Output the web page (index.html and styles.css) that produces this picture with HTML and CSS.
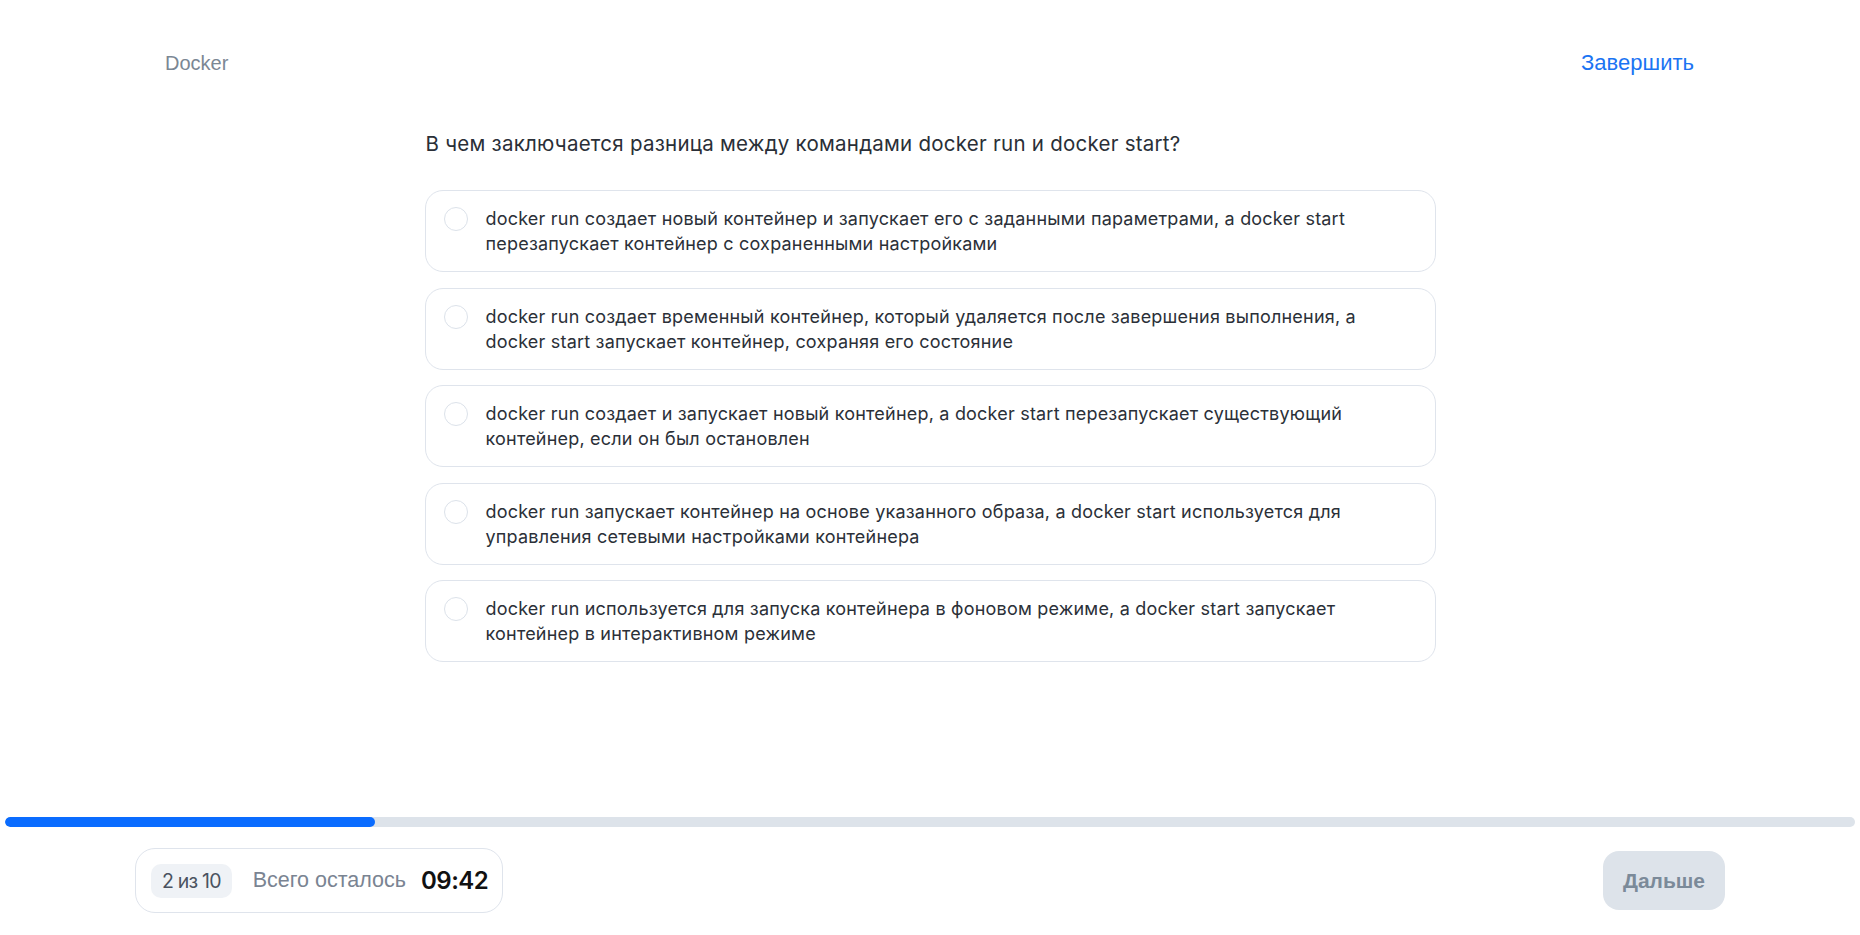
FILE: index.html
```html
<!DOCTYPE html>
<html lang="ru">
<head>
<meta charset="utf-8">
<title>Docker — тест</title>
<link rel="stylesheet" href="styles.css">
</head>
<body>
<div class="page">
  <header class="topbar">
    <span class="topic">Docker</span>
    <a class="finish" href="#">Завершить</a>
  </header>

  <main class="quiz">
    <h1 class="question">В чем заключается разница между командами docker run и docker start?</h1>
    <ul class="options">
      <li class="option"><span class="radio"></span><span class="option-text">docker run создает новый контейнер и запускает его с заданными параметрами, а docker start перезапускает контейнер с сохраненными настройками</span></li>
      <li class="option"><span class="radio"></span><span class="option-text">docker run создает временный контейнер, который удаляется после завершения выполнения, а docker start запускает контейнер, сохраняя его состояние</span></li>
      <li class="option"><span class="radio"></span><span class="option-text">docker run создает и запускает новый контейнер, а docker start перезапускает существующий контейнер, если он был остановлен</span></li>
      <li class="option"><span class="radio"></span><span class="option-text">docker run запускает контейнер на основе указанного образа, а docker start используется для управления сетевыми настройками контейнера</span></li>
      <li class="option"><span class="radio"></span><span class="option-text">docker run используется для запуска контейнера в фоновом режиме, а docker start запускает контейнер в интерактивном режиме</span></li>
    </ul>
  </main>

  <footer class="bottom">
    <div class="progress"><div class="progress-fill" style="width: 20%"></div></div>
    <div class="bottom-row">
      <div class="status">
        <span class="counter">2 из 10</span>
        <span class="remaining">Всего осталось</span>
        <span class="timer">09:42</span>
      </div>
      <button class="next" type="button">Дальше</button>
    </div>
  </footer>
</div>
</body>
</html>
```

FILE: styles.css
```css
* { box-sizing: border-box; }

html, body {
  margin: 0;
  padding: 0;
  background: #ffffff;
}

body {
  font-family: Inter, "Noto Sans", sans-serif;
  color: #2a2f36;
}

.page {
  min-height: 100vh;
  display: flex;
  flex-direction: column;
}

.topbar {
  display: flex;
  justify-content: space-between;
  align-items: center;
  padding: 52px 166px 0 165px;
  font-family: "Liberation Sans", Arial, sans-serif;
  line-height: 22px;
}

.topic {
  font-size: 20px;
  color: #7b8794;
}

.finish {
  font-size: 22px;
  color: #1b74f3;
  text-decoration: none;
}

.quiz {
  width: 1011px;
  margin: 0 auto;
}

.question {
  margin: 58px 0 34px 1px;
  font-size: 20.5px;
  line-height: 24px;
  letter-spacing: 0.25px;
  font-weight: 400;
  color: #2a2f37;
}

.options {
  list-style: none;
  margin: 0;
  padding: 0;
  display: flex;
  flex-direction: column;
  gap: 15.5px;
}

.option {
  display: flex;
  align-items: flex-start;
  gap: 18px;
  min-height: 82px;
  border: 1px solid #dfe4ec;
  border-radius: 18px;
  padding: 15px 40px 15px 18px;
  font-size: 18px;
  line-height: 25px;
  letter-spacing: 0.2px;
  color: #2b3038;
}

.radio {
  flex: none;
  width: 24px;
  height: 24px;
  margin-top: 1px;
  border: 1.5px solid #dce2ea;
  border-radius: 50%;
}

.bottom {
  margin-top: auto;
}

.progress {
  margin: 0 5px;
  height: 10px;
  border-radius: 5px;
  background: #dde3ea;
  overflow: hidden;
}

.progress-fill {
  height: 100%;
  border-radius: 5px;
  background: #0a6cff;
}

.bottom-row {
  display: flex;
  justify-content: space-between;
  align-items: center;
  padding: 21px 135px 22px 135px;
}

.status {
  display: flex;
  align-items: center;
  height: 65px;
  padding: 0 14px 0 15px;
  border: 1px solid #dfe4ec;
  border-radius: 20px;
}

.counter {
  height: 34px;
  padding: 0 11px;
  display: flex;
  align-items: center;
  border-radius: 10px;
  background: #eff2f6;
  color: #4a5260;
  font-size: 19.5px;
  letter-spacing: -0.8px;
}

.remaining {
  margin-left: 21px;
  font-family: "Liberation Sans", Arial, sans-serif;
  font-size: 21.5px;
  color: #7a8492;
}

.timer {
  margin-left: 15px;
  font-size: 24px;
  font-weight: 600;
  letter-spacing: -0.5px;
  color: #111111;
}

.next {
  width: 122px;
  height: 59px;
  border: none;
  border-radius: 16px;
  background: #dde3ea;
  color: #7b8a99;
  font-family: "Liberation Sans", Arial, sans-serif;
  font-size: 21px;
  font-weight: 700;
  cursor: default;
}
```
